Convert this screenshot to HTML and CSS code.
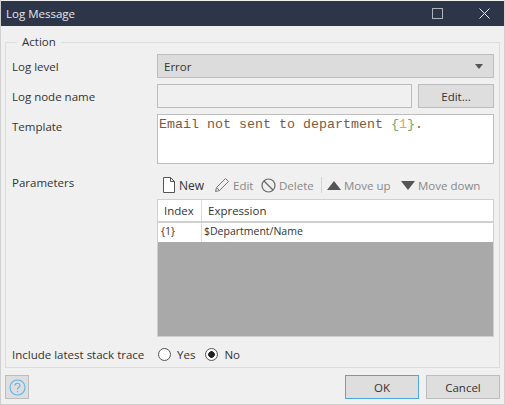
FILE: index.html
```html
<!DOCTYPE html>
<html lang="en">
<head>
    <meta charset="UTF-8">
    <title>Log Message</title>
    <link rel="stylesheet" href="styles.css">
</head>
<body>
    <div class="dialog">
        <div class="titlebar">
            <span class="title">Log Message</span>
            <svg class="win-btn win-max" width="12" height="12" viewBox="0 0 12 12"><rect x="0.5" y="0.5" width="10" height="10" fill="none" stroke="#aeb2bb"/></svg>
            <svg class="win-btn win-close" width="11" height="11" viewBox="0 0 11 11"><path d="M0.5 0.5L10.5 10.5M10.5 0.5L0.5 10.5" stroke="#e8e9ec" stroke-width="1"/></svg>
        </div>

        <div class="content">
            <fieldset class="group">
                <legend>Action</legend>

                <div class="row row-select">
                    <label>Log level</label>
                    <div class="select">
                        <span>Error</span>
                        <span class="arrow"></span>
                    </div>
                </div>

                <div class="row row-node">
                    <label>Log node name</label>
                    <div class="node-field">
                        <div class="input"></div>
                        <button class="btn btn-edit">Edit...</button>
                    </div>
                </div>

                <div class="row row-template">
                    <label>Template</label>
                    <div class="template">Email not sent to department <span class="brace">{</span><span class="num">1</span><span class="brace">}</span>.</div>
                </div>

                <div class="row row-params">
                    <label>Parameters</label>
                    <div class="params">
                        <div class="toolbar">
                            <span class="tool tool-new">
                                <svg width="14" height="16" viewBox="0 0 14 16"><path d="M1.5 0.5H8.5L12.5 4.5V15.5H1.5ZM8.5 0.5V4.5H12.5" fill="#fff" stroke="#555"/></svg>
                                New
                            </span>
                            <span class="tool tool-edit">
                                <svg width="16" height="16" viewBox="0 0 16 16"><path d="M1.5 14.5L2.5 10.5L11.5 1.5L14.5 4.5L5.5 13.5ZM2.5 10.5L5.5 13.5" fill="none" stroke="#777"/></svg>
                                Edit
                            </span>
                            <span class="tool tool-delete">
                                <svg width="15" height="15" viewBox="0 0 15 15"><circle cx="7.5" cy="7.5" r="6.5" fill="none" stroke="#666" stroke-width="1.2"/><path d="M3 3L12 12" stroke="#666" stroke-width="1.2"/></svg>
                                Delete
                            </span>
                            <span class="tool-sep"></span>
                            <span class="tool tool-up">
                                <svg width="14" height="9" viewBox="0 0 14 9"><path d="M7 0L14 9H0Z" fill="#555"/></svg>
                                Move up
                            </span>
                            <span class="tool">
                                <svg width="14" height="9" viewBox="0 0 14 9"><path d="M0 0H14L7 9Z" fill="#555"/></svg>
                                Move down
                            </span>
                        </div>
                        <div class="table">
                            <div class="tr th">
                                <div class="col-index">Index</div>
                                <div class="col-expr">Expression</div>
                            </div>
                            <div class="tr td">
                                <div class="col-index">{1}</div>
                                <div class="col-expr">$Department/Name</div>
                            </div>
                            <div class="table-empty"></div>
                        </div>
                    </div>
                </div>

                <div class="row row-radio">
                    <label>Include latest stack trace</label>
                    <div class="radios">
                        <span class="radio-item"><span class="radio"></span>Yes</span>
                        <span class="radio-item"><span class="radio radio-on"></span>No</span>
                    </div>
                </div>
            </fieldset>

            <div class="footer">
                <button class="btn btn-help">
                    <svg width="17" height="17" viewBox="0 0 17 17"><circle cx="8.5" cy="8.5" r="7.5" fill="none" stroke="#5db4ef" stroke-width="1.1"/><path d="M6 6.6C6 3.6 11 3.6 11 6.4C11 8.4 8.5 8.2 8.5 10.6" fill="none" stroke="#5db4ef" stroke-width="1.1"/><path d="M8.5 12V13.2" stroke="#5db4ef" stroke-width="1.2"/></svg>
                </button>
                <button class="btn btn-ok">OK</button>
                <button class="btn btn-cancel">Cancel</button>
            </div>
        </div>
    </div>
</body>
</html>
```

FILE: styles.css
```css
* {
    box-sizing: border-box;
}

body {
    margin: 0;
    width: 505px;
    height: 405px;
    overflow: hidden;
    background-color: #f0f0f0;
    font-family: "Open Sans", sans-serif;
    font-size: 11.5px;
    color: #333;
}

.dialog {
    width: 505px;
    height: 405px;
    padding-top: 1px;
    display: flex;
    flex-direction: column;
    border: 1px solid #d0d0d0;
    border-top: none;
}

.titlebar {
    height: 25px;
    flex: none;
    display: flex;
    align-items: center;
    padding-left: 5px;
    background-color: #2d3548;
    color: #e6e7ea;
}

.title {
    flex: 1;
}

.win-max {
    margin-right: 35px;
}

.win-close {
    margin-right: 14px;
}

.content {
    flex: 1;
    display: flex;
    flex-direction: column;
    padding: 8px 4px 5px;
}

/* Group box */
.group {
    margin: 0;
    padding: 0 5px 0 6px;
    height: 334px;
    border: 1px solid #dcdcdc;
    flex: none;
}

.group legend {
    margin-left: 5px;
    padding: 0 5px;
    line-height: 16px;
}

.row {
    display: flex;
}

.row label {
    width: 145px;
    flex: none;
}

.row-select {
    margin-top: 4px;
    height: 24px;
    align-items: center;
}

.select {
    flex: 1;
    height: 24px;
    display: flex;
    align-items: center;
    justify-content: space-between;
    padding: 1px 10px 0 6px;
    background-color: #dcdcdc;
    border: 1px solid #bdbdbd;
}

.arrow {
    width: 0;
    height: 0;
    border-left: 4px solid transparent;
    border-right: 4px solid transparent;
    border-top: 5px solid #555;
}

.row-node {
    margin-top: 6px;
    height: 24px;
    align-items: center;
}

.row-select label,
.row-node label {
    padding-top: 1px;
}

.node-field {
    flex: 1;
    display: flex;
    gap: 6px;
}

.input {
    flex: 1;
    height: 24px;
    background-color: #f0f0f0;
    border: 1px solid #bdbdbd;
}

.btn {
    padding: 0;
    height: 24px;
    background-color: #dedede;
    border: 1px solid #bdbdbd;
    font-family: inherit;
    font-size: 11.5px;
    color: #333;
}

.btn-edit {
    width: 76px;
}

.row-template {
    margin-top: 6px;
    height: 50px;
}

.row-template label {
    padding-top: 5px;
}

.template {
    flex: 1;
    height: 50px;
    padding: 2px 0 0 1px;
    background-color: #fff;
    border: 1px solid #bdbdbd;
    font-family: "Liberation Mono", monospace;
    font-size: 13.33px;
    color: #7a5a3c;
}

.brace {
    color: #6fa86f;
}

.num {
    color: #f0a040;
}

.row-params {
    margin-top: 9px;
}

.row-params label {
    padding-top: 2px;
}

.params {
    flex: 1;
}

.toolbar {
    height: 26px;
    display: flex;
    align-items: center;
    padding: 0 0 2px 5px;
    color: #888;
}

.tool {
    display: flex;
    align-items: center;
    gap: 3px;
}

.tool-new {
    color: #333;
    width: 52px;
    font-size: 12px;
}

.tool-edit {
    width: 47px;
}

.tool-delete {
    width: 60px;
}

.tool-sep {
    width: 1px;
    height: 16px;
    margin-right: 5px;
    background-color: #d4d4d4;
}

.tool-up {
    width: 74px;
}

.table {
    height: 138px;
    display: flex;
    flex-direction: column;
    border: 1px solid #d0d0d0;
    background-color: #fff;
}

.tr {
    display: flex;
    flex: none;
    align-items: center;
    border-bottom: 2px solid #d0d0d0;
}

.th {
    height: 23px;
}

.td {
    height: 19px;
    padding-bottom: 3px;
    border-bottom: none;
    font-size: 10.5px;
}

.col-index {
    width: 44px;
    height: 100%;
    padding-left: 6px;
    display: flex;
    align-items: center;
    border-right: 1px solid #dcdcdc;
}

.td .col-index {
    height: 19px;
    margin-bottom: -3px;
    padding: 0 0 3px 3px;
}

.col-expr {
    padding-left: 2px;
}

.th .col-expr {
    padding-left: 6px;
}

.table-empty {
    flex: 1;
    background-color: #a9a9a9;
}

.row-radio {
    margin-top: 8px;
    height: 18px;
    align-items: center;
}

.radios {
    display: flex;
    gap: 10px;
    padding-left: 1px;
}

.radio-item {
    display: flex;
    align-items: center;
    gap: 6px;
}

.radio {
    width: 13px;
    height: 13px;
    border: 1px solid #555;
    border-radius: 50%;
    background-color: #fff;
}

.radio-on {
    background: radial-gradient(circle, #222 0, #222 3px, #fff 3.6px);
}

/* Bottom buttons */
.footer {
    margin-top: 7px;
    display: flex;
    gap: 7px;
}

.btn-help {
    width: 24px;
    margin-right: auto;
    display: flex;
    align-items: center;
    justify-content: center;
}

.btn-ok {
    width: 74px;
    border-color: #4da6e0;
}

.btn-cancel {
    width: 74px;
}
```
